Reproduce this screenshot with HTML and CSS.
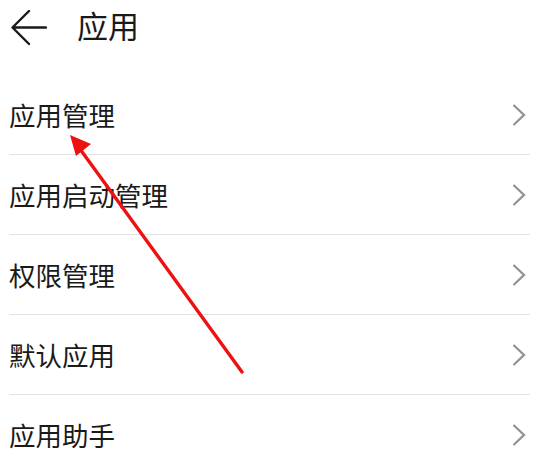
FILE: index.html
```html
<!DOCTYPE html>
<html lang="zh-CN">
<head>
<meta charset="utf-8">
<title>应用</title>
<link rel="stylesheet" href="styles.css">
</head>
<body>
<div class="page">
  <header class="header">
    <svg class="back" width="36" height="36" viewBox="0 0 36 36">
      <path d="M35 17.5H2M18 1L1.5 17.5L18 34" fill="none" stroke="#1a1a1a" stroke-width="2.4" stroke-linecap="round" stroke-linejoin="round"/>
    </svg>
    <h1 class="title">应用</h1>
  </header>
  <ul class="list">
    <li class="row"><span class="label">应用管理</span><svg class="chev" width="14" height="22" viewBox="0 0 14 22"><path d="M1.5 1L12 11L1.5 21" fill="none" stroke="#939393" stroke-width="2.3"/></svg></li>
    <li class="row"><span class="label">应用启动管理</span><svg class="chev" width="14" height="22" viewBox="0 0 14 22"><path d="M1.5 1L12 11L1.5 21" fill="none" stroke="#939393" stroke-width="2.3"/></svg></li>
    <li class="row"><span class="label">权限管理</span><svg class="chev" width="14" height="22" viewBox="0 0 14 22"><path d="M1.5 1L12 11L1.5 21" fill="none" stroke="#939393" stroke-width="2.3"/></svg></li>
    <li class="row"><span class="label">默认应用</span><svg class="chev" width="14" height="22" viewBox="0 0 14 22"><path d="M1.5 1L12 11L1.5 21" fill="none" stroke="#939393" stroke-width="2.3"/></svg></li>
    <li class="row"><span class="label">应用助手</span><svg class="chev" width="14" height="22" viewBox="0 0 14 22"><path d="M1.5 1L12 11L1.5 21" fill="none" stroke="#939393" stroke-width="2.3"/></svg></li>
  </ul>
  <svg class="annotation" width="540" height="460" viewBox="0 0 540 460">
    <line x1="242" y1="372" x2="80" y2="149" stroke="#ee1111" stroke-width="3.4" stroke-linecap="round"/>
    <polygon points="70,135 91,144 76,156" fill="#ee1111"/>
  </svg>
</div>
</body>
</html>
```
FILE: styles.css
```css
html, body {
  margin: 0;
  padding: 0;
  background: #ffffff;
}
.page {
  position: relative;
  width: 540px;
  height: 460px;
  overflow: hidden;
  font-family: "Noto Sans CJK SC", "Noto Sans", sans-serif;
  color: #1a1a1a;
}
.header {
  height: 75px;
  display: flex;
  align-items: flex-start;
  padding-top: 10px;
  box-sizing: border-box;
}
.back {
  margin-left: 11px;
  flex: none;
}
.title {
  margin: -3px 0 0 30px;
  font-size: 31px;
  font-weight: 400;
  line-height: 36px;
}
.list {
  list-style: none;
  margin: 0;
  padding: 0 10px 0 9px;
}
.row {
  height: 79px;
  display: flex;
  align-items: center;
  justify-content: space-between;
  border-bottom: 1px solid #e2e2e2;
}
.label {
  font-size: 26.5px;
  line-height: 30px;
}
.chev {
  margin-right: 4px;
  flex: none;
}
.annotation {
  position: absolute;
  left: 0;
  top: 0;
  pointer-events: none;
}
```
